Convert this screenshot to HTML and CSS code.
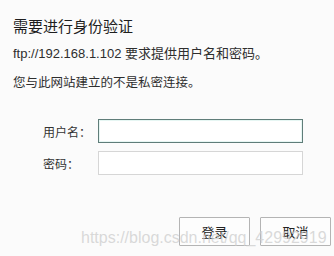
FILE: index.html
```html
<!DOCTYPE html>
<html lang="zh-CN">
<head>
<meta charset="utf-8">
<link rel="stylesheet" href="styles.css">
</head>
<body>
<div class="dialog">
  <h1 class="title">需要进行身份验证</h1>
  <p class="msg msg-first">ftp://192.168.1.102 要求提供用户名和密码。</p>
  <p class="msg msg-second">您与此网站建立的不是私密连接。</p>
  <div class="form">
    <label class="label">用户名：</label>
    <div class="input input-focus"></div>
    <label class="label">密码：</label>
    <div class="input"></div>
  </div>
  <div class="actions">
    <button class="btn">登录</button>
    <button class="btn">取消</button>
  </div>
  <div class="watermark">https://blog.csdn.net/qq_42992919</div>
</div>
</body>
</html>
```
FILE: styles.css
```css
html, body {
  margin: 0;
  padding: 0;
  background: #fbfbfb;
}
.dialog {
  position: relative;
  width: 334px;
  height: 256px;
  padding: 0 0 0 13px;
  box-sizing: border-box;
  font-family: "Liberation Sans", "Noto Sans CJK SC", sans-serif;
  color: #2a2a2a;
  overflow: hidden;
}
.title {
  margin: 18px 0 0 0;
  font-size: 15px;
  line-height: 18px;
  font-weight: normal;
  color: #1e1e1e;
}
.msg {
  margin: 0;
  font-size: 13px;
  line-height: 18px;
  color: #2e2e2e;
}
.msg-first {
  margin-top: 9px;
}
.msg-second {
  margin-top: 11px;
  font-size: 12.5px;
}
.form {
  display: grid;
  grid-template-columns: 55px 205px;
  row-gap: 8px;
  margin: 27px 0 0 30px;
  align-items: center;
}
.label {
  font-size: 12px;
  color: #333;
}
.input {
  height: 24px;
  box-sizing: border-box;
  background: #fff;
  border: 1px solid #d6d6d6;
}
.input-focus {
  border-color: #5f7d79;
  box-shadow: inset 0 0 0 1px #e6f6f3;
}
.actions {
  display: flex;
  justify-content: flex-end;
  gap: 10px;
  margin: 42px 3px 0 0;
}
.btn {
  width: 71px;
  height: 29px;
  margin: 0;
  padding: 0;
  background: #fdfdfd;
  border: 1px solid #b4b4b4;
  border-radius: 1px;
  font-family: "Liberation Sans", "Noto Sans CJK SC", sans-serif;
  font-size: 13px;
  color: #222;
}
.watermark {
  position: absolute;
  left: 81px;
  top: 228px;
  font-family: "Liberation Sans", sans-serif;
  font-size: 16px;
  line-height: 20px;
  color: rgba(205, 205, 205, 0.75);
  white-space: nowrap;
  pointer-events: none;
}
```
